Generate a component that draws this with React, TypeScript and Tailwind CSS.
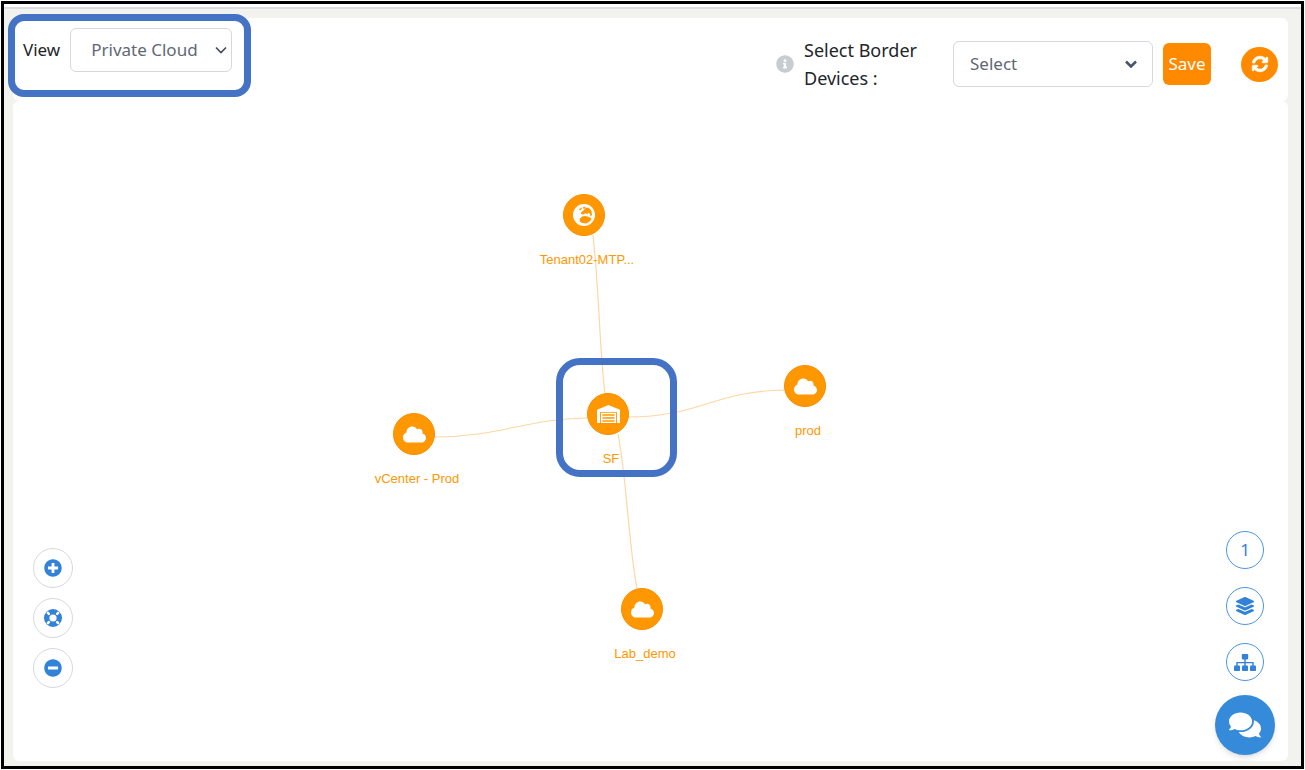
import { useState } from 'react';
import type { ReactNode } from 'react';
import {
    FaCloud,
    FaComments,
    FaInfoCircle,
    FaLayerGroup,
    FaMinusCircle,
    FaPlusCircle,
    FaSyncAlt,
} from 'react-icons/fa';

interface TopologyNode {
    id: string;
    label: string;
    kind: 'tenant' | 'site' | 'cloud';
    x: number;
    y: number;
}

// x / y are the centre of the circle on the stage
const nodes: TopologyNode[] = [
    { id: 'tenant', label: 'Tenant02-MTP...', kind: 'tenant', x: 220, y: 35 },
    { id: 'site', label: 'SF', kind: 'site', x: 244, y: 234 },
    { id: 'prod', label: 'prod', kind: 'cloud', x: 441, y: 206 },
    { id: 'vcenter', label: 'vCenter - Prod', kind: 'cloud', x: 50, y: 254 },
    { id: 'lab', label: 'Lab_demo', kind: 'cloud', x: 278, y: 429 },
];

const links = [
    'M229 55 C236 120 235 165 241 214',
    'M264 237 C336 237 350 211 420 210',
    'M71 257 C136 257 160 239 223 238',
    'M254 254 C263 300 264 360 273 409',
];

function EarthIcon() {
    return (
        <svg viewBox="0 0 22 22" className="size-[22px]" aria-hidden="true">
            <circle cx="11" cy="11" r="11" fill="#fff" />
            <path d="M6 5.5 8 3.5 9 4.5 7 6.5Z M10 3 12.5 2.5 12 4.5 10.5 5Z" fill="#ff9800" />
            <path
                d="M8 8.5 10.5 6.5 13 3.5 16 4 18.5 7 19 11 17.5 12.5 17 10 15 8.5 14.5 10.5 12.5 9 10.5 10.5 8 10Z"
                fill="#ff9800"
            />
            <path d="M6.5 15 9 12.6 12 12 14.5 12.4 18 14 18.5 15.5 16 18 13 19.4 9 19 7 17.5Z" fill="#ff9800" />
        </svg>
    );
}

function WarehouseIcon() {
    return (
        <svg viewBox="0 0 23 18" className="h-[18px] w-[23px]" aria-hidden="true">
            <path d="M0 4.8 11.5 0 23 4.8V18H19.9V7H3.1V18H0Z" fill="#fff" />
            <path
                d="M4 7.8H19V18H4Z M5.4 9.2V10.8H17.6V9.2Z M5.4 12.2V13.8H17.6V12.2Z M5.4 15.2V16.7H17.6V15.2Z"
                fill="#fff"
                fillRule="evenodd"
            />
        </svg>
    );
}

function LifeRingIcon() {
    return (
        <svg viewBox="0 0 18 18" className="size-[18px]" aria-hidden="true">
            <circle cx="9" cy="9" r="9" fill="#3182d8" />
            <circle cx="9" cy="9" r="3.6" fill="#fff" />
            <g stroke="#fff" strokeWidth="2.6" strokeLinecap="round">
                <path d="M3.9 3.9 4.8 4.8M14.1 3.9 13.2 4.8M3.9 14.1 4.8 13.2M14.1 14.1 13.2 13.2" />
            </g>
        </svg>
    );
}

function SitemapIcon() {
    return (
        <svg viewBox="0 0 22 17" className="h-[17px] w-[22px]" fill="currentColor" aria-hidden="true">
            <rect x="7.8" y="0" width="6.4" height="5.4" rx="0.8" />
            <rect x="0" y="11.6" width="6" height="5.4" rx="0.8" />
            <rect x="8" y="11.6" width="6" height="5.4" rx="0.8" />
            <rect x="16" y="11.6" width="6" height="5.4" rx="0.8" />
            <path d="M11 5V12M3 12V8.6H19V12" fill="none" stroke="currentColor" strokeWidth="1.4" />
        </svg>
    );
}

function Chevron({ className, weight }: { className: string; weight: number }) {
    return (
        <svg
            viewBox="0 0 12 8"
            className={`pointer-events-none absolute top-1/2 h-2 w-3 -translate-y-1/2 ${className}`}
            fill="none"
            stroke="currentColor"
            strokeWidth={weight}
            aria-hidden="true"
        >
            <path d="M1 1.5 6 6.5 11 1.5" />
        </svg>
    );
}

function ZoomButton({ label, children }: { label: string; children: ReactNode }) {
    return (
        <button
            type="button"
            aria-label={label}
            className="flex size-10 items-center justify-center rounded-full border border-[#d5d9df] bg-white text-[#3182d8]"
        >
            {children}
        </button>
    );
}

function ToolButton({ label, children }: { label: string; children: ReactNode }) {
    return (
        <button
            type="button"
            aria-label={label}
            className="flex size-[38px] items-center justify-center rounded-full border border-[#4a96e0] bg-white text-[17px] text-[#3182d8]"
        >
            {children}
        </button>
    );
}

function NodeIcon({ kind }: { kind: TopologyNode['kind'] }) {
    if (kind === 'tenant') return <EarthIcon />;
    if (kind === 'site') return <WarehouseIcon />;
    return <FaCloud className="size-[23px]" />;
}

function Toolbar() {
    const [view, setView] = useState('Private Cloud');
    const [device, setDevice] = useState('Select');

    return (
        <header className="relative flex items-start justify-between rounded-md bg-white px-[10px] pb-[9px] text-[17px] text-[#212529]">
            <div className="mt-[10px] flex items-center gap-[10px]">
                <label htmlFor="view">View</label>
                <div className="relative">
                    <select
                        id="view"
                        value={view}
                        onChange={(e) => setView(e.target.value)}
                        className="h-11 w-[162px] appearance-none rounded-md border border-[#d5d9df] bg-white pl-5 text-[#5f6875]"
                    >
                        <option>Private Cloud</option>
                        <option>Public Cloud</option>
                    </select>
                    <Chevron className="right-[5px] text-[#444b55]" weight={1.6} />
                </div>
            </div>

            <div className="mt-[18px] flex items-center">
                <FaInfoCircle className="size-[18px] text-[#c8ccd2]" />
                <label htmlFor="border-devices" className="ml-[10px] w-[149px] pr-6 text-lg leading-7">
                    Select Border Devices :
                </label>
                <div className="relative">
                    <select
                        id="border-devices"
                        value={device}
                        onChange={(e) => setDevice(e.target.value)}
                        className="h-[46px] w-[200px] appearance-none rounded-md border border-[#d5d9df] bg-white pl-4 text-[#5f6875]"
                    >
                        <option>Select</option>
                    </select>
                    <Chevron className="right-4 text-[#4a5568]" weight={2.6} />
                </div>
                <button type="button" className="ml-[10px] h-[42px] w-12 rounded-md bg-[#ff8a00] text-white">
                    Save
                </button>
                <button
                    type="button"
                    aria-label="Refresh"
                    className="ml-[30px] flex h-[35px] w-[37px] items-center justify-center rounded-[50%] bg-[#ff8a00] text-white"
                >
                    <FaSyncAlt className="size-4 overflow-visible stroke-white stroke-[24]" />
                </button>
            </div>

            {/* callout round the view picker */}
            <div className="pointer-events-none absolute -top-1 -left-[5px] h-[83px] w-[243px] rounded-2xl border-[7px] border-[#4472c4]" />
        </header>
    );
}

function Topology() {
    return (
        <div className="relative h-[500px] w-[560px]">
            <svg viewBox="0 0 560 500" className="absolute inset-0 size-full" fill="none" stroke="#ffd6a3" aria-hidden="true">
                {links.map((d) => (
                    <path key={d} d={d} strokeWidth="1.2" />
                ))}
            </svg>
            {nodes.map((node) => (
                <div
                    key={node.id}
                    className="absolute size-[42px] -translate-x-1/2 -translate-y-1/2"
                    style={{ left: node.x, top: node.y }}
                >
                    <div className="flex size-full items-center justify-center rounded-full border border-[#fb8c00] bg-[#ff9800] text-white">
                        <NodeIcon kind={node.kind} />
                    </div>
                    <span className="absolute top-14 left-6 -translate-x-1/2 font-['Liberation_Sans',Arial,sans-serif] text-[13px] leading-5 whitespace-nowrap text-[#ff9800]">
                        {node.label}
                    </span>
                </div>
            ))}
            {/* callout round the selected site */}
            <div className="pointer-events-none absolute top-[178px] left-48 h-[119px] w-[121px] rounded-3xl border-[7px] border-[#4472c4]" />
        </div>
    );
}

export default function App() {
    return (
        <div className="flex min-h-screen bg-white p-px font-['Noto_Sans','Segoe_UI',sans-serif]">
            <div className="flex flex-1 flex-col border-[3px] border-black">
                <div className="mt-[3px] flex flex-1 flex-col border-t-2 border-[#dcdde3] bg-[#f2f2ee] pt-[9px] pr-[13px] pb-[5px] pl-[9px]">
                    <Toolbar />
                    <main className="flex flex-1 items-end rounded-md bg-white pr-[13px] pl-5">
                        <div className="mb-[73px] flex flex-col gap-[10px]">
                            <ZoomButton label="Zoom in">
                                <FaPlusCircle className="size-[18px]" />
                            </ZoomButton>
                            <ZoomButton label="Fit to screen">
                                <LifeRingIcon />
                            </ZoomButton>
                            <ZoomButton label="Zoom out">
                                <FaMinusCircle className="size-[18px]" />
                            </ZoomButton>
                        </div>

                        <div className="mt-[79px] flex flex-1 justify-center self-start">
                            <Topology />
                        </div>

                        <div className="mb-[6px] flex flex-col items-center">
                            <div className="flex flex-col gap-[18px]">
                                <ToolButton label="Level 1">1</ToolButton>
                                <ToolButton label="Layers">
                                    <FaLayerGroup className="size-[18px]" />
                                </ToolButton>
                                <ToolButton label="Hierarchy">
                                    <SitemapIcon />
                                </ToolButton>
                            </div>
                            <button
                                type="button"
                                aria-label="Chat"
                                className="mt-[14px] flex size-[60px] items-center justify-center rounded-full bg-[#358ad9] text-white shadow-md"
                            >
                                <FaComments className="size-8" />
                            </button>
                        </div>
                    </main>
                </div>
            </div>
        </div>
    );
}
